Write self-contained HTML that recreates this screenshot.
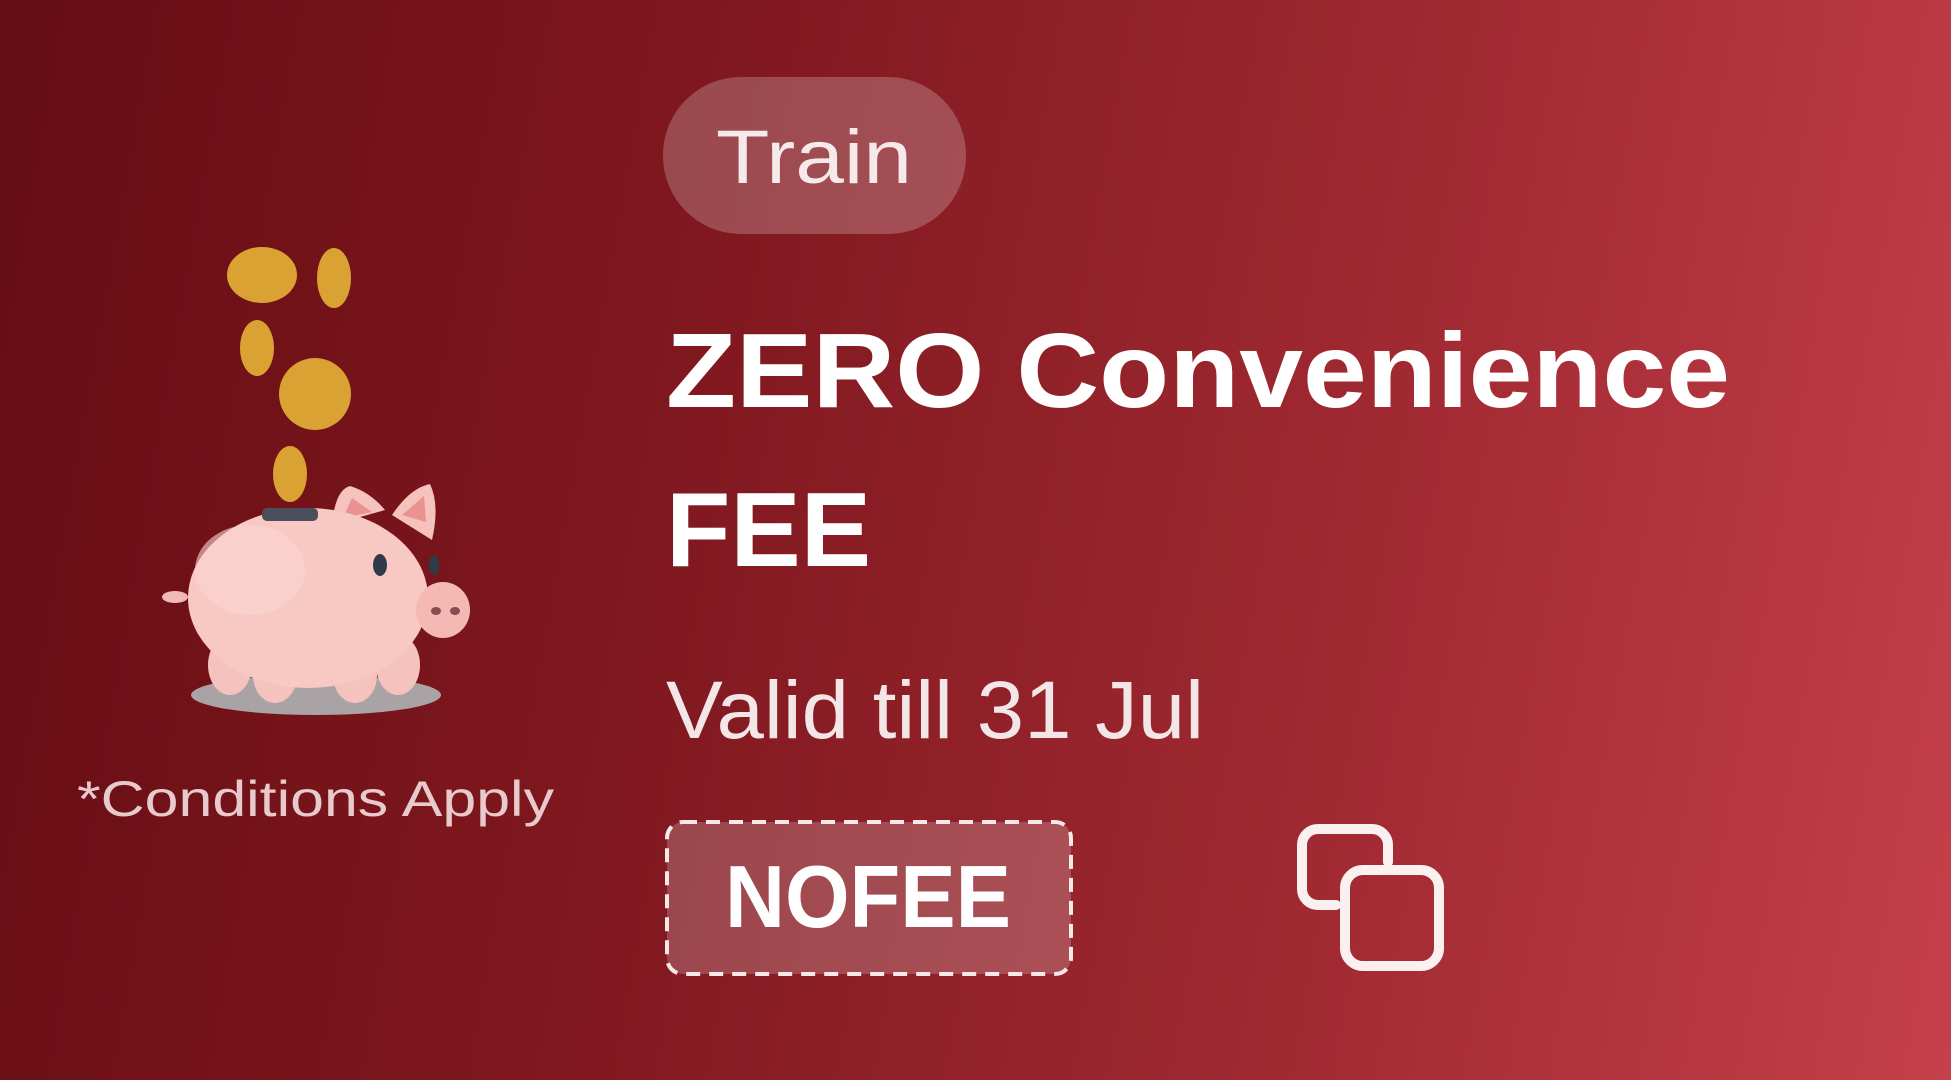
<!DOCTYPE html>
<html><head><meta charset="utf-8"><style>
html,body{margin:0;padding:0}
body{width:1951px;height:1080px;overflow:hidden;background:linear-gradient(100deg,#650d13 0%,#80181f 35%,#a22a33 70%,#c4404a 100%);position:relative;font-family:"Liberation Sans",sans-serif}
svg{position:absolute;left:0;top:0}
</style></head><body>
<svg width="1951" height="1080" viewBox="0 0 1951 1080">
<rect x="663" y="77" width="303" height="157" rx="78" fill="#ffffff" fill-opacity="0.22"/>
<text x="814" y="183" text-anchor="middle" font-family="Liberation Sans" font-size="76" fill="#f6e9ea" textLength="196" lengthAdjust="spacingAndGlyphs">Train</text>
<text x="666" y="407" font-family="Liberation Sans" font-weight="bold" font-size="106" fill="#fff" textLength="1064" lengthAdjust="spacingAndGlyphs">ZERO Convenience</text>
<text x="666" y="566" font-family="Liberation Sans" font-weight="bold" font-size="106" fill="#fff" textLength="205" lengthAdjust="spacingAndGlyphs">FEE</text>
<text x="666" y="738" font-family="Liberation Sans" font-size="82" fill="#f3e6e7" textLength="538" lengthAdjust="spacingAndGlyphs">Valid till 31 Jul</text>
<text x="77" y="816" font-family="Liberation Sans" font-size="50" fill="#e8c9cc" textLength="477" lengthAdjust="spacingAndGlyphs">*Conditions Apply</text>
<rect x="667" y="822" width="404" height="152" rx="16" fill="#ffffff" fill-opacity="0.2" stroke="#f6e7e8" stroke-width="4" stroke-dasharray="14 9"/>
<text x="868" y="927" text-anchor="middle" font-family="Liberation Sans" font-weight="bold" font-size="88" fill="#fff" textLength="286" lengthAdjust="spacingAndGlyphs">NOFEE</text>
<g fill="none" stroke="#fbf0f0" stroke-width="10" stroke-linecap="round" stroke-linejoin="round">
<path d="M1336 905 H1318 A16 16 0 0 1 1302 889 V845 A16 16 0 0 1 1318 829 H1372 A16 16 0 0 1 1388 845 V862"/>
<rect x="1345" y="870" width="94" height="96" rx="18"/>
</g>
<g fill="#d9a233">
<ellipse cx="262" cy="275" rx="35" ry="28"/>
<ellipse cx="334" cy="278" rx="17" ry="30"/>
<ellipse cx="257" cy="348" rx="17" ry="28"/>
<circle cx="315" cy="394" r="36"/>
<ellipse cx="290" cy="474" rx="17" ry="28"/>
</g>
<ellipse cx="316" cy="695" rx="125" ry="20" fill="#a9a3a6"/>
<ellipse cx="175" cy="597" rx="13" ry="6" fill="#f1b8b5"/>
<ellipse cx="230" cy="665" rx="22" ry="30" fill="#f6c2bd"/>
<ellipse cx="275" cy="675" rx="22" ry="28" fill="#f6c2bd"/>
<ellipse cx="355" cy="675" rx="22" ry="28" fill="#f6c2bd"/>
<ellipse cx="398" cy="665" rx="22" ry="30" fill="#f6c2bd"/>
<path d="M332 525 Q335 490 350 486 Q370 492 385 510Z" fill="#f6c2bd"/>
<path d="M392 515 Q410 488 430 484 Q440 505 432 540Z" fill="#f6c2bd"/>
<path d="M343 518 L352 498 L372 512Z" fill="#e89390"/>
<path d="M402 515 L424 496 L426 522Z" fill="#e89390"/>
<ellipse cx="308" cy="598" rx="120" ry="90" fill="#f8c8c3"/>
<ellipse cx="250" cy="570" rx="55" ry="45" fill="#fcd6d2" opacity="0.6"/>
<rect x="262" y="508" width="56" height="13" rx="5" fill="#4b4f5c"/>
<ellipse cx="380" cy="565" rx="7" ry="11" fill="#2f3a4a"/>
<ellipse cx="434" cy="565" rx="5" ry="10" fill="#2f3a4a"/>
<ellipse cx="443" cy="610" rx="27" ry="28" fill="#f5b9b4"/>
<ellipse cx="436" cy="611" rx="5" ry="4" fill="#8d4a4f"/>
<ellipse cx="455" cy="611" rx="5" ry="4" fill="#8d4a4f"/>
</svg>
</body></html>
